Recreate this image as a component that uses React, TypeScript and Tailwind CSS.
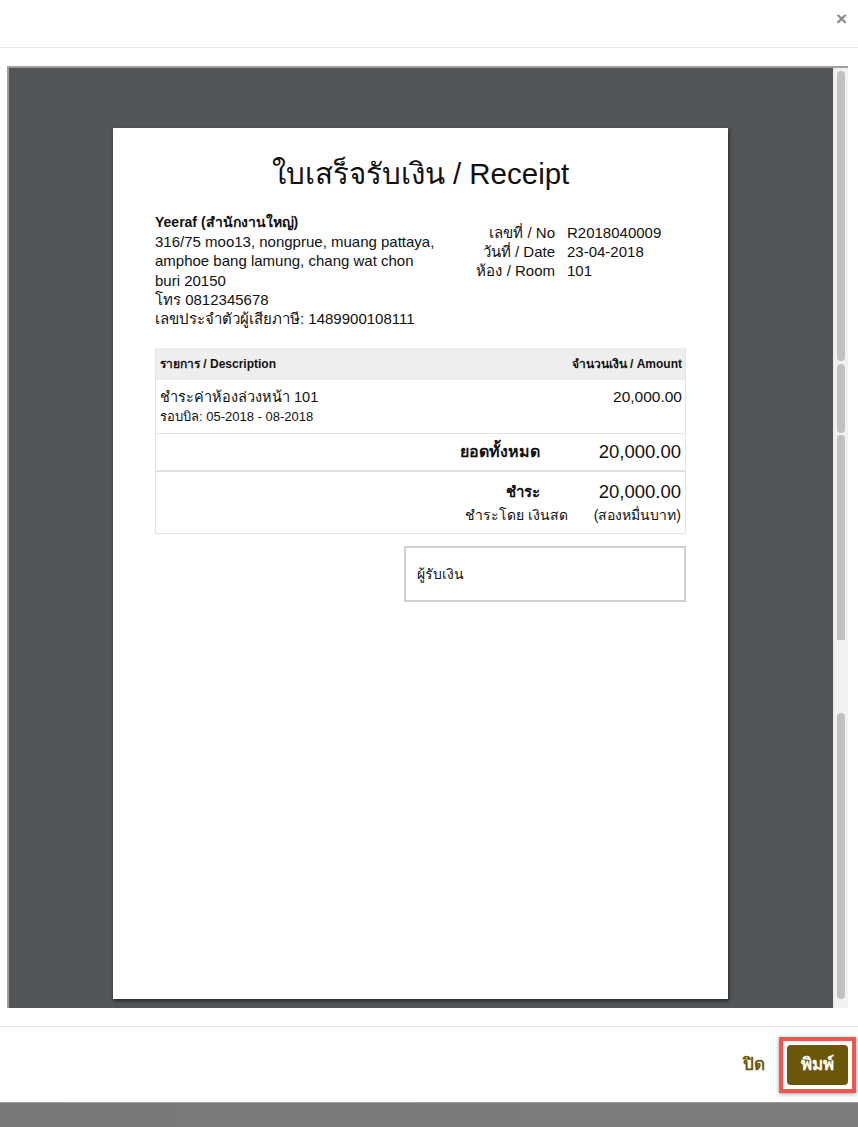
import React from "react";

const font = { fontFamily: '"Liberation Sans", Arial, "Noto Sans", sans-serif' };

export default function App() {
  return (
    <div className="w-[858px] h-[1127px] bg-white flex flex-col overflow-hidden" style={font}>
      {/* header */}
      <div className="h-[48px] border-b border-[#e5e5e5] flex items-start justify-end pr-[11px] pt-[9px] shrink-0">
        <span className="text-[#8a8a8a] text-[19px] font-bold leading-[19px]">×</span>
      </div>

      {/* body */}
      <div className="pt-[18px] pl-[7px] pr-[10px] pb-[18px] shrink-0">
        <div className="h-[942px] border-t-2 border-l-2 border-[#9e9e9e] flex">
          <div className="flex-1 bg-[#525659] pt-[60px] flex justify-center overflow-hidden">
            <div className="w-[615px] h-[871px] bg-white shadow-[1px_2px_4px_rgba(0,0,0,0.55)] px-[42px] pt-[29px] text-[#111] -ml-[1px]">
              <h1 className="text-center text-[29.5px] leading-[34px] font-medium text-[#111]">
                ใบเสร็จรับเงิน / Receipt
              </h1>

              <div className="flex items-start mt-[22px] text-[15px] leading-[19.2px]">
                <div className="w-[282px]">
                  <div className="font-bold text-[14px]">Yeeraf (สำนักงานใหญ่)</div>
                  <div>316/75 moo13, nongprue, muang pattaya, amphoe bang lamung, chang wat chon buri 20150</div>
                  <div>โทร 0812345678</div>
                  <div>เลขประจำตัวผู้เสียภาษี: 1489900108111</div>
                </div>
                <div className="mt-[10px] ml-[30px] grid grid-cols-[88px_auto] gap-x-[12px] content-start">
                  <div className="text-right">เลขที่ / No</div>
                  <div>R2018040009</div>
                  <div className="text-right">วันที่ / Date</div>
                  <div>23-04-2018</div>
                  <div className="text-right">ห้อง / Room</div>
                  <div>101</div>
                </div>
              </div>

              {/* table */}
              <div className="mt-[20px] border border-[#e4e4e4] border-t-0">
                <div className="h-[32px] bg-[#eeeeee] flex items-center justify-between pl-[4px] pr-[3px] text-[12px] font-bold">
                  <span>รายการ / Description</span>
                  <span>จำนวนเงิน / Amount</span>
                </div>
                <div className="h-[54px] border-b border-[#e4e4e4] flex justify-between pl-[4px] pr-[3px] pt-[8px]">
                  <div>
                    <div className="text-[14.5px] leading-[18px]">ชำระค่าห้องล่วงหน้า 101</div>
                    <div className="text-[13px] leading-[18px] mt-[2px]">รอบบิล: 05-2018 - 08-2018</div>
                  </div>
                  <div className="text-[15.5px] leading-[18px]">20,000.00</div>
                </div>
                <div className="h-[38px] border-b-2 border-[#e0e0e0] flex items-center justify-end pr-[4px]">
                  <span className="text-[16px] font-bold">ยอดทั้งหมด</span>
                  <span className="w-[141px] text-right text-[18.5px]">20,000.00</span>
                </div>
                <div className="h-[61px] pr-[4px] pt-[9px]">
                  <div className="flex justify-end items-center leading-[22px]">
                    <span className="text-[15px] font-bold">ชำระ</span>
                    <span className="w-[141px] text-right text-[18.5px]">20,000.00</span>
                  </div>
                  <div className="flex justify-end items-center mt-[2px] text-[14px] leading-[20px]">
                    <span>ชำระโดย เงินสด</span>
                    <span className="ml-[26px]">(สองหมื่นบาท)</span>
                  </div>
                </div>
              </div>

              <div className="flex justify-end mt-[12px]">
                <div className="w-[282px] h-[56px] border-2 border-[#cfcfcf] flex items-center pl-[11px] text-[14px]">
                  ผู้รับเงิน
                </div>
              </div>
            </div>
          </div>
          {/* scrollbar */}
          <div className="w-[15px] bg-[#f1f1f1] border-l border-[#e8e8e8] flex flex-col items-center pt-[3px]">
            <div className="w-[8px] h-[290px] bg-[#c1c1c1] rounded-full" />
            <div className="w-[8px] h-[69px] bg-[#c1c1c1] rounded-full mt-[3px]" />
            <div className="w-[8px] h-[205px] bg-[#c1c1c1] rounded-t-full mt-[2px]" />
            <div className="w-[8px] h-[286px] bg-[#c1c1c1] rounded-full mt-[73px]" />
          </div>
        </div>
      </div>

      {/* footer */}
      <div className="h-[76px] border-t border-[#e5e5e5] flex items-center justify-end pr-[2px] shrink-0">
        <span className="text-[#6e5a0c] text-[17px] font-bold mr-[14px]">ปิด</span>
        <div className="border-4 border-[#f0564b] p-[4px] shadow-[0_1px_4px_rgba(0,0,0,0.4)]">
          <div className="w-[61px] h-[40px] bg-[#6b570a] rounded-[4px] flex items-center justify-center text-white text-[17px] font-bold">
            พิมพ์
          </div>
        </div>
      </div>

      <div className="flex-1 bg-gradient-to-r from-[#787878] to-[#7d7d7d] border-t border-[#9a9a9a]" />
    </div>
  );
}
